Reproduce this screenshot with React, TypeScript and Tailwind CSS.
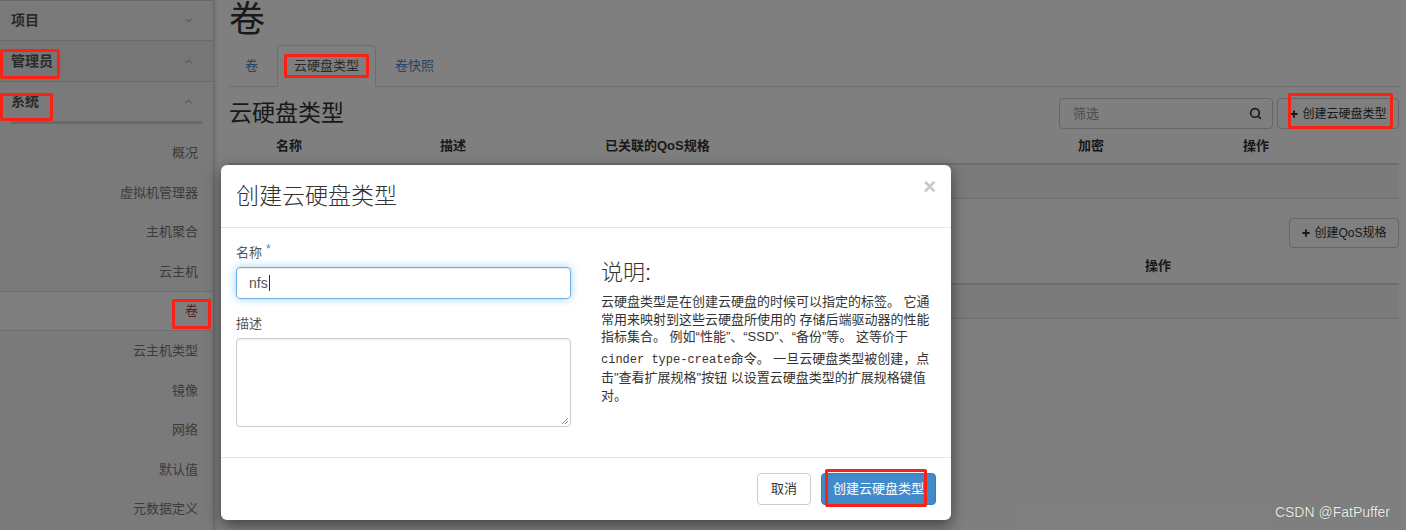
import { ChevronDown, ChevronUp, Plus, Search } from "lucide-react";

const subItems = ["概况", "虚拟机管理器", "主机聚合", "云主机", "卷", "云主机类型", "镜像", "网络", "默认值", "元数据定义"];

const Sidebar = () => {
    return (
        <aside className="w-[214px] shrink-0 h-full bg-[#f5f5f5] border-r border-[#d0d0d0] shadow-[2px_0_3px_rgba(0,0,0,0.12)] border-t border-t-[#cfcfcf]">
            <div className="h-[40px] flex items-center justify-between pl-[11px] pr-[19px] border-b border-[#d4d4d4]">
                <span className="text-[14px] font-bold text-[#555]">项目</span>
                <ChevronDown size={11} strokeWidth={1.5} className="text-[#666]" />
            </div>
            <div className="h-[41px] flex items-center justify-between pl-[11px] pr-[19px] bg-[#ececec] border-b border-[#d4d4d4]">
                <span className="text-[14px] font-bold text-[#555]">管理员</span>
                <ChevronUp size={11} strokeWidth={1.5} className="text-[#666]" />
            </div>
            <div className="h-[39px] flex items-center justify-between pl-[11px] pr-[19px]">
                <span className="text-[14px] font-bold text-[#555]">系统</span>
                <ChevronUp size={11} strokeWidth={1.5} className="text-[#666]" />
            </div>
            <div className="mx-[11px] h-[3px] bg-[#d2d2d2]" />
            <ul className="mt-[9px]">
                {subItems.map((item) => (
                    <li
                        key={item}
                        className={
                            item === "卷"
                                ? "h-[40px] flex items-center justify-end pr-[15px] text-[13px] bg-[#fdfdfd] border-y border-[#dcdcdc] text-[#b53a33]"
                                : "h-[39.5px] flex items-center justify-end pr-[15px] text-[13px] text-[#777]"
                        }
                    >
                        {item}
                    </li>
                ))}
            </ul>
        </aside>
    );
};

const MainContent = () => {
    return (
        <main className="flex-1 pl-[15px] pr-[7px]">
            <h1 className="text-[36px] leading-[40px] text-[#333]">卷</h1>
            <div className="mt-[6px] flex items-end border-b border-[#dddddd] h-[41px]">
                <div className="h-[41px] px-4 mr-[3px] flex items-center text-[13px] text-[#428bca]">卷</div>
                <div className="h-[42px] -mb-px px-4 mr-[3px] flex items-center text-[13px] text-[#555] bg-white border border-[#dddddd] border-b-white rounded-t-[4px]">云硬盘类型</div>
                <div className="h-[41px] px-4 flex items-center text-[13px] text-[#428bca]">卷快照</div>
            </div>

            <div className="mt-[11px] h-[31px] flex items-center justify-between">
                <h2 className="text-[23px] text-[#333]">云硬盘类型</h2>
                <div className="flex items-center gap-[4px]">
                    <div className="w-[214px] h-[31px] border border-[#cccccc] rounded-[4px] flex items-center justify-between pl-[13px] pr-[10px]">
                        <span className="text-[13px] text-[#999]">筛选</span>
                        <Search size={13} strokeWidth={3} className="text-[#333]" />
                    </div>
                    <div className="w-[122px] h-[31px] border border-[#cccccc] rounded-[4px] flex items-center justify-center gap-[3px] text-[12px] text-[#333]">
                        <Plus size={10} strokeWidth={4.5} />
                        <span>创建云硬盘类型</span>
                    </div>
                </div>
            </div>

            <div className="h-[36px] grid grid-cols-[39px_164px_165px_473px_165px_1fr] items-center border-b-2 border-[#dddddd] text-[13px] font-bold text-[#333]">
                <span />
                <span className="pl-[8px]">名称</span>
                <span className="pl-[8px]">描述</span>
                <span className="pl-[8px]">已关联的QoS规格</span>
                <span className="pl-[8px]">加密</span>
                <span className="pl-[8px]">操作</span>
            </div>
            <div className="h-[34px] bg-[#f7f7f7] border-b border-[#dddddd]" />

            <div className="mt-[19px] h-[30px] flex items-center justify-between">
                <h2 className="text-[23px] text-[#333]">QoS规格</h2>
                <div className="w-[110px] h-[30px] border border-[#cccccc] rounded-[4px] flex items-center justify-center gap-[3px] text-[12px] text-[#333]">
                    <Plus size={10} strokeWidth={4.5} />
                    <span>创建QoS规格</span>
                </div>
            </div>
            <div className="h-[37px] grid grid-cols-[39px_300px_300px_269px_1fr] items-center border-b-2 border-[#dddddd] text-[13px] font-bold text-[#333]">
                <span />
                <span className="pl-[8px]">名称</span>
                <span className="pl-[8px]">消费者</span>
                <span className="pl-[8px]">规格</span>
                <span className="pl-[8px]">操作</span>
            </div>
            <div className="h-[34px] bg-[#f7f7f7] border-b border-[#dddddd]" />
        </main>
    );
};

const Modal = () => {
    return (
        <div className="absolute left-[221px] top-[165px] w-[730px] h-[355px] bg-white rounded-[6px] shadow-[0_5px_15px_rgba(0,0,0,0.5)] flex flex-col">
            <div className="h-[63px] px-[15px] flex items-center justify-between border-b border-[#e5e5e5]">
                <h4 className="text-[23px] leading-[30px] text-[#333] font-light">创建云硬盘类型</h4>
                <span className="self-start mt-[11px] text-[22px] leading-[22px] font-bold text-[#c8c8c8]">×</span>
            </div>
            <div className="h-[229px] px-[15px] pt-[15px] flex">
                <div className="w-[335px]">
                    <div className="h-[19px] leading-[19px] mb-[5px] text-[13px] text-[#555] flex items-start">
                        <span>名称</span>
                        <span className="ml-[4px] text-[12px] leading-[12px] text-[#428bca]">*</span>
                    </div>
                    <div className="h-[32px] border border-[#66afe9] rounded-[4px] shadow-[inset_0_1px_1px_rgba(0,0,0,0.075),0_0_8px_rgba(102,175,233,0.6)] flex items-center pl-[12px] text-[14px] text-[#555]">
                        nfs<span className="w-px h-[16px] bg-[#333] ml-px" />
                    </div>
                    <div className="mt-[15px] h-[19px] leading-[19px] mb-[5px] text-[13px] text-[#555]">描述</div>
                    <div className="relative h-[89px] border border-[#cccccc] rounded-[4px] shadow-[inset_0_1px_1px_rgba(0,0,0,0.075)]">
                        <svg className="absolute right-[1px] bottom-[1px]" width="9" height="9" viewBox="0 0 9 9">
                            <path d="M8 2 L2 8 M8 5 L5 8" stroke="#888" strokeWidth="1" />
                        </svg>
                    </div>
                </div>
                <div className="ml-[30px] w-[335px]">
                    <h3 className="mt-[17px] mb-[7px] text-[22px] leading-[26px] text-[#333] font-light">说明:</h3>
                    <div className="text-[13px] leading-[17.5px] text-[#333]">
                        <div>云硬盘类型是在创建云硬盘的时候可以指定的标签。 它通</div>
                        <div>常用来映射到这些云硬盘所使用的 存储后端驱动器的性能</div>
                        <div>指标集合。 例如“性能”、“SSD”、“备份”等。 这等价于</div>
                        <div className="mt-[4px]">
                            <code className="font-['Liberation_Mono',monospace] text-[12px]">cinder type-create</code>命令。 一旦云硬盘类型被创建，点
                        </div>
                        <div>击"查看扩展规格"按钮 以设置云硬盘类型的扩展规格键值</div>
                        <div>对。</div>
                    </div>
                </div>
            </div>
            <div className="h-[63px] px-[15px] flex items-center justify-end gap-[10px] border-t border-[#e5e5e5]">
                <div className="h-[32px] px-[13px] flex items-center border border-[#cccccc] rounded-[4px] text-[13px] text-[#333]">取消</div>
                <div className="h-[32px] px-[11px] flex items-center border border-[#357ebd] bg-[#428bca] rounded-[4px] text-[13px] text-white">创建云硬盘类型</div>
            </div>
        </div>
    );
};

const marks = [
    "left-[0px] top-[49px] w-[60px] h-[30px]",
    "left-[0px] top-[93px] w-[53px] h-[28px]",
    "left-[172px] top-[299px] w-[39px] h-[30px]",
    "left-[284px] top-[54px] w-[85px] h-[24px]",
    "left-[1288px] top-[93px] w-[105px] h-[36px]",
    "left-[825px] top-[469px] w-[102px] h-[38px]",
];

export default function App() {
    return (
        <div className="relative w-[1406px] h-[530px] overflow-hidden bg-white flex font-['Liberation_Sans','Noto_Sans_CJK_SC',sans-serif]">
            <Sidebar />
            <MainContent />
            <div className="absolute inset-0 bg-black/50" />
            <Modal />
            {marks.map((m) => (
                <div key={m} className={`absolute border-[3px] border-[#fa2115] rounded-[2px] ${m}`} />
            ))}
            <span className="absolute right-[16px] bottom-[7px] text-[14px] text-[#e8e8e8] [text-shadow:0_0_1px_#444]">CSDN @FatPuffer</span>
        </div>
    );
}
